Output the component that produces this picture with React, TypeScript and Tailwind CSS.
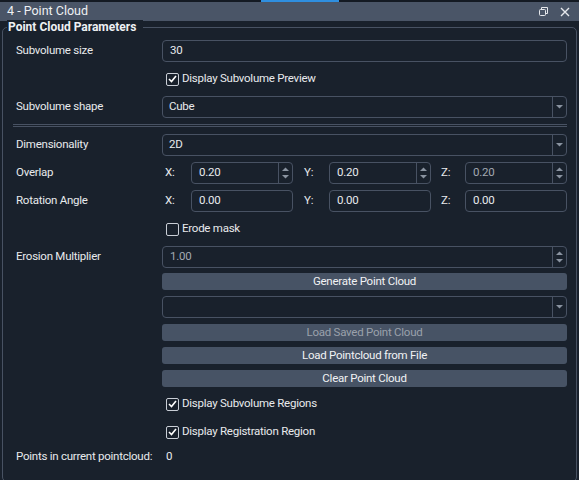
import React from "react";

const font = { fontFamily: "Roboto, 'Noto Sans', sans-serif" };

function Arrow({ up = false }: { up?: boolean }) {
  return (
    <svg width="7" height="4" viewBox="0 0 7 4">
      {up ? <path d="M0 4 L3.5 0.5 L7 4 Z" fill="#8a93a0" /> : <path d="M0 0 L7 0 L3.5 3.5 Z" fill="#8a93a0" />}
    </svg>
  );
}

function TextBox({ value, spin = false, dim = false, className = "" }: { value: string; spin?: boolean; dim?: boolean; className?: string }) {
  return (
    <div className={`flex h-[22px] rounded-[4px] border border-[#485263] ${className}`}>
      <div className={`flex flex-1 items-center pl-[7px] ${dim ? "text-[#a3a9b2]" : "text-[#e8eaed]"}`}>{value}</div>
      {spin && (
        <div className="flex w-[14px] flex-col items-center justify-between border-l border-[#485263] py-[4px]">
          <Arrow up />
          <Arrow />
        </div>
      )}
    </div>
  );
}

function Combo({ value }: { value: string }) {
  return (
    <div className="flex h-[22px] flex-1 rounded-[4px] border border-[#485263]">
      <div className="flex flex-1 items-center pl-[6px] text-[#e8eaed]">{value}</div>
      <div className="flex w-[14px] items-center justify-center border-l border-[#485263]">
        <Arrow />
      </div>
    </div>
  );
}

function Check({ label, checked }: { label: string; checked: boolean }) {
  return (
    <div className="flex h-[22px] items-center pl-[4px]">
      <div className="flex h-[13px] w-[13px] items-center justify-center rounded-[2px] border border-[#c9ced6]">
        {checked && (
          <svg width="9" height="8" viewBox="0 0 9 8">
            <path d="M1 4 L3.5 6.5 L8 1" stroke="#ffffff" strokeWidth="1.6" fill="none" />
          </svg>
        )}
      </div>
      <span className="ml-[3px] text-[#e8eaed]">{label}</span>
    </div>
  );
}

function Row({ label, children, className = "" }: { label?: string; children: React.ReactNode; className?: string }) {
  return (
    <div className={`flex items-center ${className}`}>
      <div className="w-[146px] shrink-0 whitespace-nowrap text-[#e8eaed]">{label}</div>
      <div className="flex flex-1">{children}</div>
    </div>
  );
}

function Button({ label, disabled = false }: { label: string; disabled?: boolean }) {
  return (
    <div className={`flex h-[17px] flex-1 items-center justify-center rounded-[3px] bg-[#475365] ${disabled ? "text-[#9aa1ab]" : "text-[#f1f2f4]"}`}>
      {label}
    </div>
  );
}

function Xyz({ values, spin, dimZ = false }: { values: string[]; spin: boolean; dimZ?: boolean }) {
  return (
    <div className="flex flex-1 items-center">
      <span className="w-[29px] pl-[3px] text-[#e8eaed]">X:</span>
      <TextBox value={values[0]} spin={spin} className="w-[102px]" />
      <span className="ml-[11px] w-[25px] text-[#e8eaed]">Y:</span>
      <TextBox value={values[1]} spin={spin} className="w-[102px]" />
      <span className="ml-[10px] w-[24px] text-[#e8eaed]">Z:</span>
      <TextBox value={values[2]} spin={spin} dim={dimZ} className="flex-1" />
    </div>
  );
}

export default function App() {
  return (
    <div className="relative h-[480px] w-[579px] overflow-hidden bg-[#19212c] text-[11.5px] tracking-[-0.25px]" style={font}>
      <div className="flex h-[2px] bg-[#141a23]">
        <div className="ml-[261px] w-[78px] bg-[#2f8fe0]" />
      </div>
      <div className="flex h-[19px] items-center bg-[#4a5567] pl-[7px] pr-[9px]">
        <span className="flex-1 text-[12.5px] tracking-normal text-[#eef0f3]">4 - Point Cloud</span>
        <svg width="11" height="11" viewBox="0 0 11 11" className="mr-[11px]">
          <path d="M3.5 3 V1.5 h6 v6 H8" stroke="#e6e8ec" fill="none" />
          <rect x="1.5" y="3.5" width="6" height="6" rx="1" stroke="#e6e8ec" fill="none" />
        </svg>
        <svg width="10" height="10" viewBox="0 0 10 10">
          <path d="M1 1 L9 9 M9 1 L1 9" stroke="#e6e8ec" strokeWidth="1.4" />
        </svg>
      </div>
      <div className="relative ml-[2px] mt-[6px] h-[455px] w-[575px] rounded-[5px] border border-[#485263] pl-[13px] pr-[9px] pt-[12px]">
        <span className="absolute left-[4px] top-[-8px] bg-[#19212c] pl-[1px] pr-[7px] text-[12px] font-bold leading-[14px] tracking-normal text-[#eef0f3]">
          Point Cloud Parameters
        </span>
        <Row label="Subvolume size">
          <TextBox value="30" className="flex-1" />
        </Row>
        <Row className="mt-[6px]">
          <Check label="Display Subvolume Preview" checked />
        </Row>
        <Row label="Subvolume shape" className="mt-[6px]">
          <Combo value="Cube" />
        </Row>
        <div className="ml-[-3px] mt-[6px] h-[3px] border-y border-[#485263]" />
        <div className="h-[7px]" />
        <Row label="Dimensionality">
          <Combo value="2D" />
        </Row>
        <Row label="Overlap" className="mt-[6px]">
          <Xyz values={["0.20", "0.20", "0.20"]} spin dimZ />
        </Row>
        <Row label="Rotation Angle" className="mt-[6px]">
          <Xyz values={["0.00", "0.00", "0.00"]} spin={false} />
        </Row>
        <Row className="mt-[6px]">
          <Check label="Erode mask" checked={false} />
        </Row>
        <Row label="Erosion Multiplier" className="mt-[6px]">
          <TextBox value="1.00" spin dim className="flex-1" />
        </Row>
        <Row className="mt-[5px]">
          <Button label="Generate Point Cloud" />
        </Row>
        <Row className="mt-[6px]">
          <Combo value="" />
        </Row>
        <Row className="mt-[6px]">
          <Button label="Load Saved Point Cloud" disabled />
        </Row>
        <Row className="mt-[6px]">
          <Button label="Load Pointcloud from File" />
        </Row>
        <Row className="mt-[6px]">
          <Button label="Clear Point Cloud" />
        </Row>
        <Row className="mt-[6px]">
          <Check label="Display Subvolume Regions" checked />
        </Row>
        <Row className="mt-[6px]">
          <Check label="Display Registration Region" checked />
        </Row>
        <Row label="Points in current pointcloud:" className="mt-[3px] h-[22px]">
          <span className="pl-[4px] text-[#e8eaed]">0</span>
        </Row>
      </div>
    </div>
  );
}
